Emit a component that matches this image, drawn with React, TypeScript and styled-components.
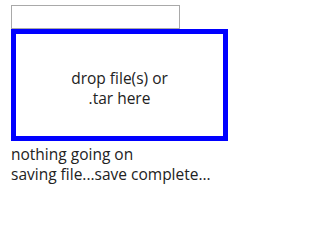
import React from "react";
import styled, { createGlobalStyle } from "styled-components";

const Global = createGlobalStyle`
  html, body { margin: 0; padding: 0; background: #fff; }
  body { font-family: "Open Sans", "Noto Sans", sans-serif; color: #222; }
`;

const Page = styled.div`
  display: flex;
  flex-direction: column;
  align-items: flex-start;
  padding: 5px 0 0 11px;
`;

const NameInput = styled.input`
  box-sizing: border-box;
  width: 169px;
  height: 24px;
  margin: 0;
  border: 1px solid #a9a9a9;
  padding: 2px 4px;
  font: inherit;
  outline: none;
`;

const DropZone = styled.div`
  box-sizing: border-box;
  width: 217px;
  height: 112px;
  border: 5px solid #0000ff;
  display: flex;
  align-items: center;
  justify-content: center;
  text-align: center;
  font-size: 15.5px;
  line-height: 20px;
  padding: 6px 50px 0;
`;

const Status = styled.div`
  font-size: 15.5px;
  line-height: 20px;
  white-space: nowrap;
`;

const StatusList = styled.div`
  display: flex;
  flex-direction: column;
  padding-top: 3px;
`;

export default function App() {
  return (
    <>
      <Global />
      <Page>
        <NameInput type="text" />
        <DropZone>drop file(s) or .tar here</DropZone>
        <StatusList>
          <Status>nothing going on</Status>
          <Status>saving file...save complete...</Status>
        </StatusList>
      </Page>
    </>
  );
}
